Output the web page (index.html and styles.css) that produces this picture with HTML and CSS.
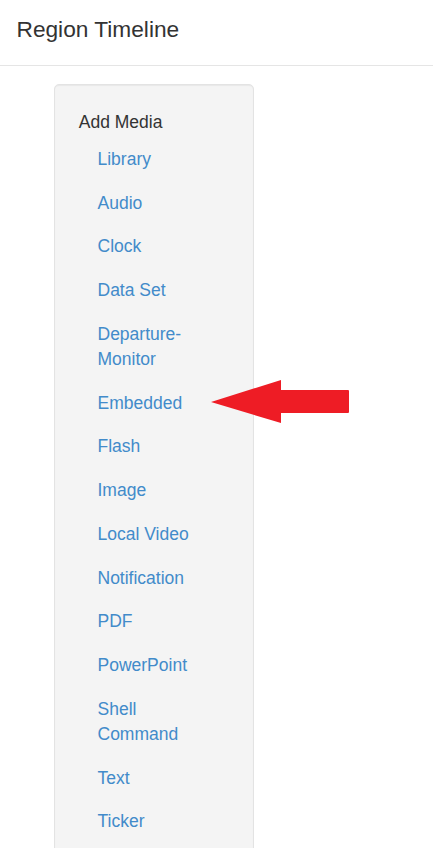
FILE: index.html
```html
<!DOCTYPE html>
<html>
<head>
<meta charset="utf-8">
<link rel="stylesheet" href="styles.css">
</head>
<body>
<header class="header">
  <h4 class="title">Region Timeline</h4>
</header>
<main class="content">
  <div class="well">
    <div class="well-heading">Add Media</div>
    <ul class="nav">
      <li><a href="#">Library</a></li>
      <li><a href="#">Audio</a></li>
      <li><a href="#">Clock</a></li>
      <li><a href="#">Data Set</a></li>
      <li><a href="#">Departure-Monitor</a></li>
      <li><a href="#">Embedded</a></li>
      <li><a href="#">Flash</a></li>
      <li><a href="#">Image</a></li>
      <li><a href="#">Local Video</a></li>
      <li><a href="#">Notification</a></li>
      <li><a href="#">PDF</a></li>
      <li><a href="#">PowerPoint</a></li>
      <li><a href="#">Shell Command</a></li>
      <li><a href="#">Text</a></li>
      <li><a href="#">Ticker</a></li>
    </ul>
  </div>
  <svg class="arrow" width="140" height="46" viewBox="0 0 140 46">
    <path d="M0 22 L70 0 L70 10 L137 10 Q138 10 138 11 L138 32 Q138 33 137 33 L70 33 L70 43 Z" fill="#ee1c25"/>
  </svg>
</main>
</body>
</html>
```
FILE: styles.css
```css
html, body {
  margin: 0;
  padding: 0;
  background: #fff;
  font-family: "Liberation Sans", Arial, sans-serif;
  font-size: 17.5px;
  line-height: 25px;
  color: #333;
}
.header {
  padding: 17px 16.5px 23px;
  border-bottom: 1px solid #e5e5e5;
}
.title {
  margin: 0;
  font-size: 22.7px;
  line-height: 25px;
  font-weight: 400;
  color: #333;
}
.content {
  position: relative;
  padding: 18px 0 0 54px;
}
.well {
  width: 150.5px;
  background: #f4f4f4;
  border: 1px solid #e3e3e3;
  border-radius: 5px;
  padding: 25px 23.75px 23.75px;
  box-shadow: inset 0 1px 1px rgba(0,0,0,0.05);
}
.well-heading {
  margin-bottom: 2.5px;
}
.nav {
  list-style: none;
  margin: 0;
  padding: 0;
}
.nav li a {
  display: block;
  padding: 9.375px 18.75px;
  color: #428bca;
  text-decoration: none;
}
.arrow {
  position: absolute;
  left: 211px;
  top: 314px;
}
```
